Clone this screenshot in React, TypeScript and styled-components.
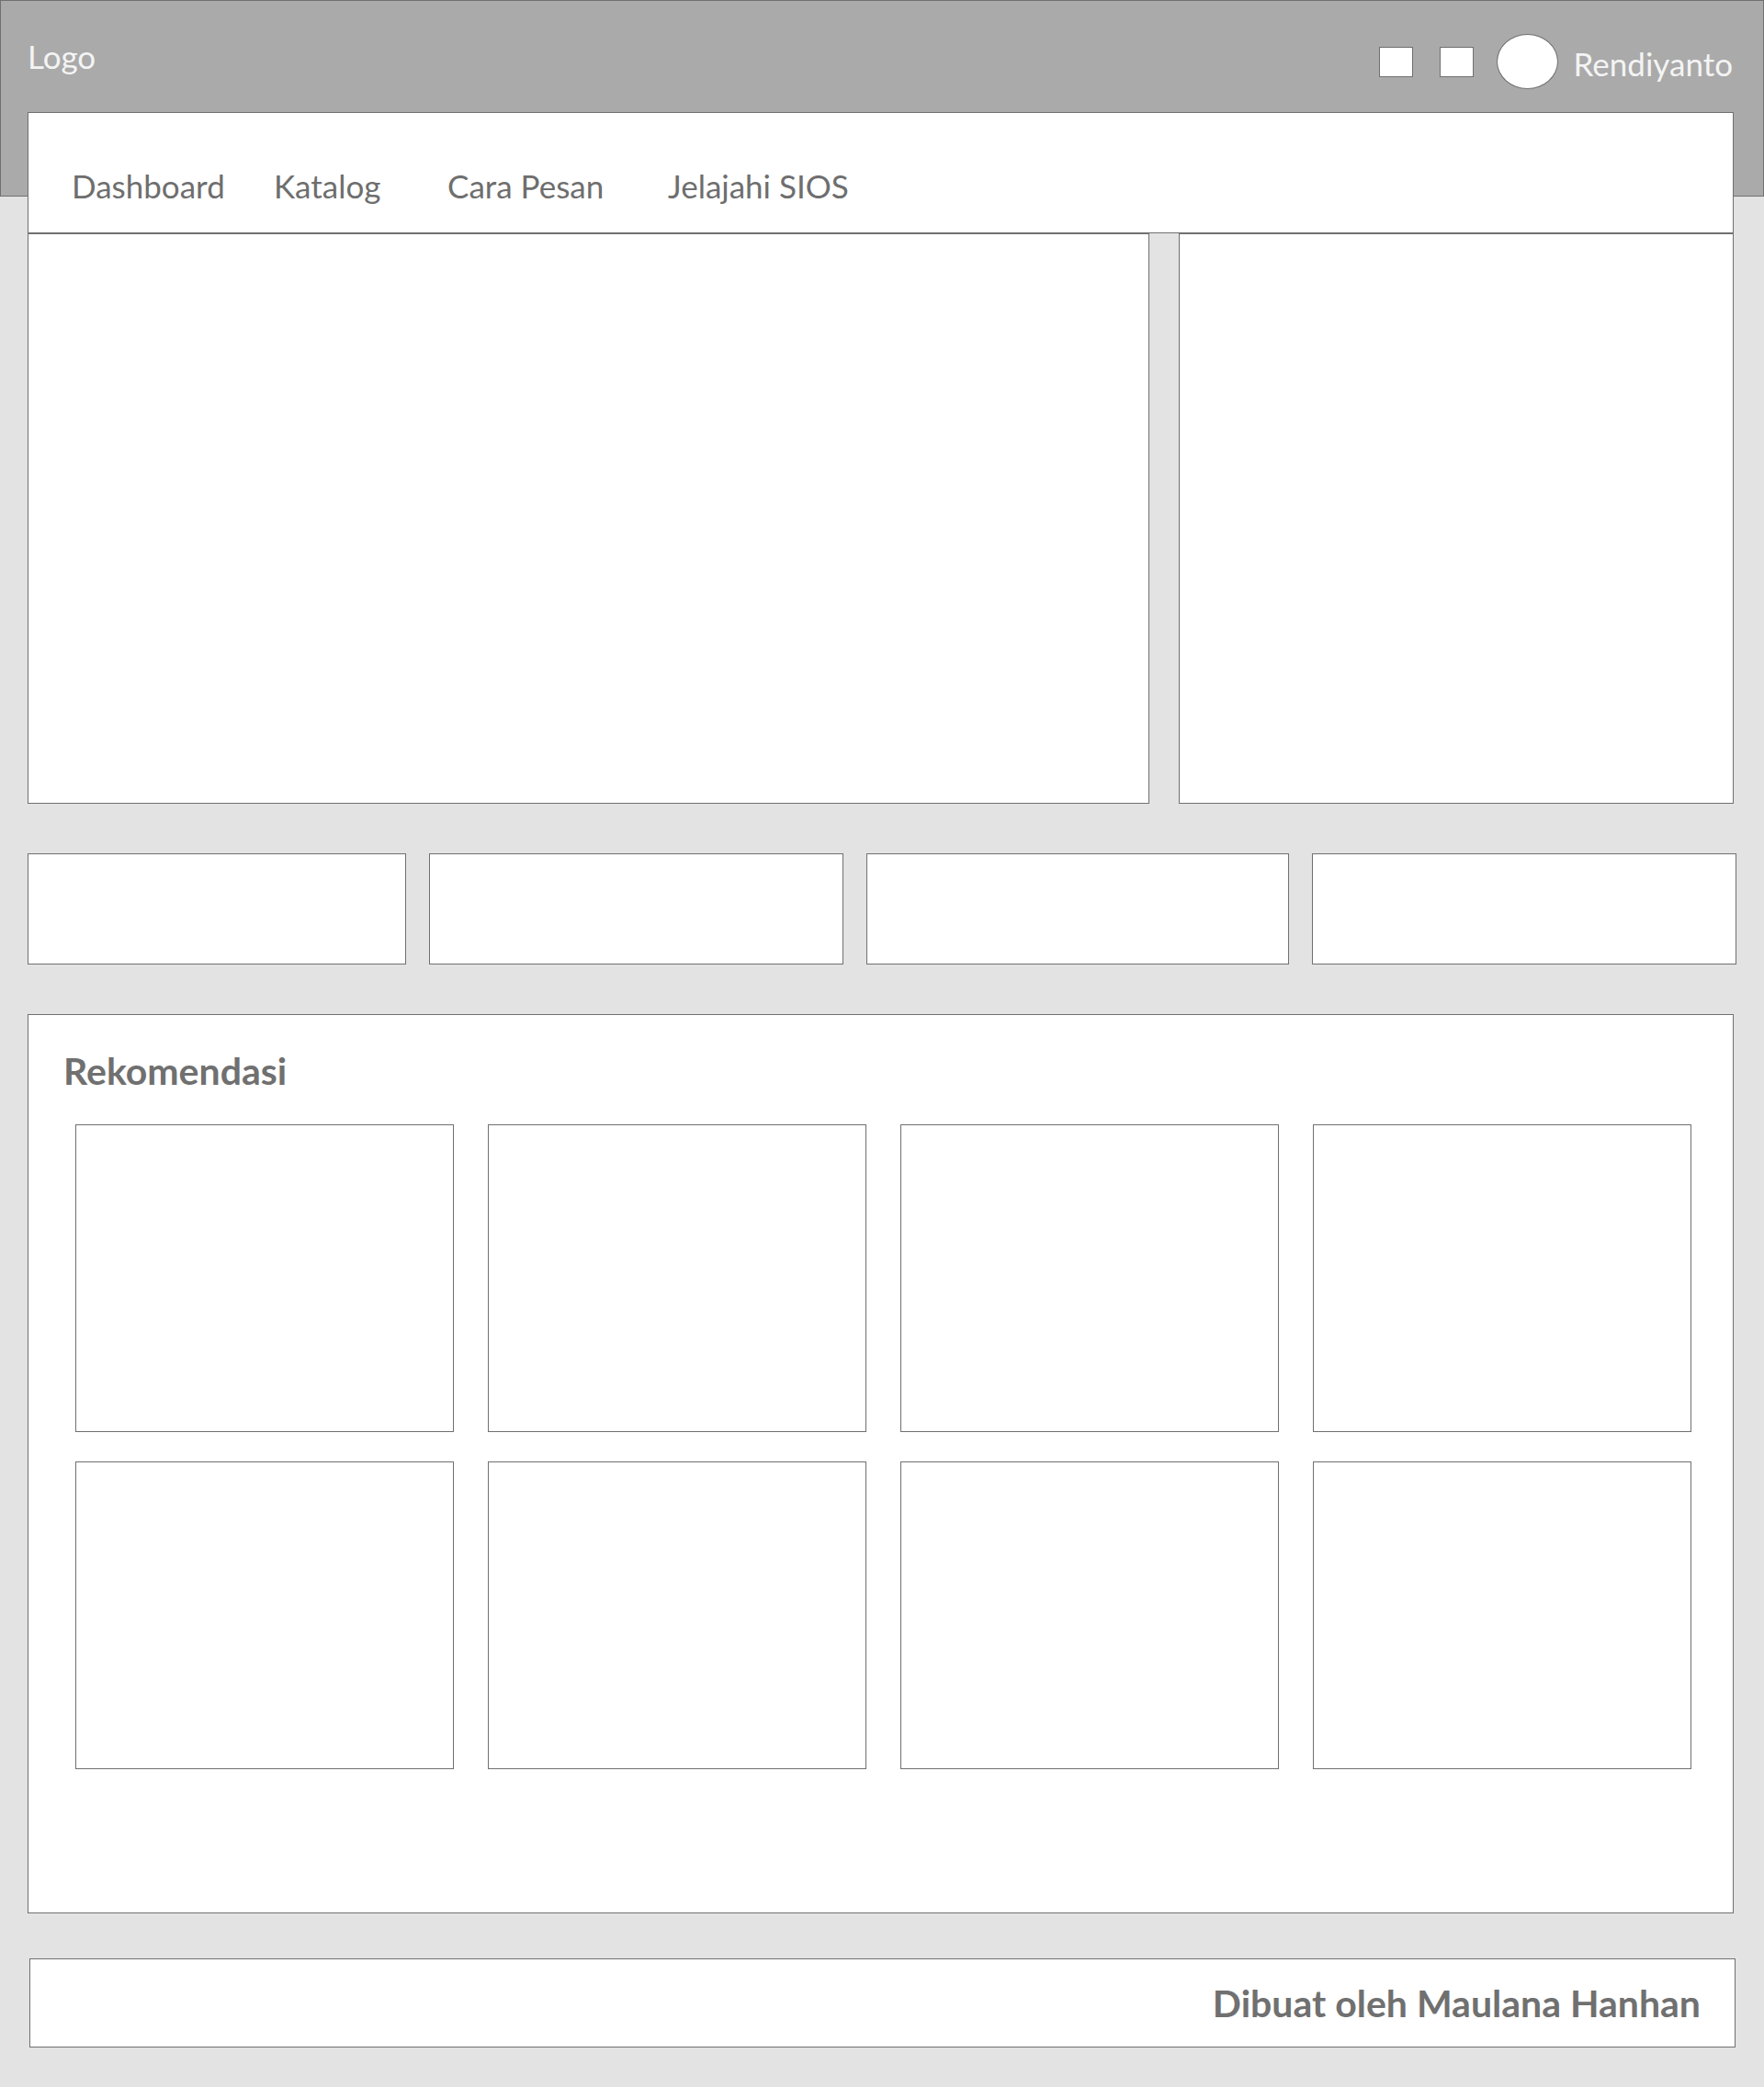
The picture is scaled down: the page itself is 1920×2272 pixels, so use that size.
import styled, { createGlobalStyle } from 'styled-components';

const GlobalStyle = createGlobalStyle`
    * {
        box-sizing: border-box;
    }

    body {
        margin: 0;
        background-color: #e3e3e3;
        font-family: 'Lato', 'Open Sans', sans-serif;
    }
`;

const Page = styled.div`
    width: 1920px;
    min-height: 2272px;
    background-color: #e3e3e3;
`;

const Header = styled.header`
    height: 214px;
    background-color: #aaaaaa;
    border: 1px solid #707070;
`;

const TopBar = styled.div`
    display: flex;
    justify-content: space-between;
    align-items: flex-start;
    padding: 0 33px 0 29px;
`;

const Logo = styled.div`
    margin-top: 39px;
    font-size: 35px;
    line-height: 42px;
    color: #f4f4f4;
`;

const UserArea = styled.div`
    display: flex;
    align-items: center;
    margin-top: 36px;
`;

const IconBox = styled.div<{ $gap: number }>`
    width: 37px;
    height: 33px;
    background-color: #fff;
    border: 1px solid #707070;
    margin-right: ${(p) => p.$gap}px;
`;

const Avatar = styled.div`
    width: 67px;
    height: 60px;
    border-radius: 50%;
    background-color: #fff;
    border: 1px solid #707070;
    margin-right: 17px;
`;

const UserName = styled.span`
    margin-top: 4px;
    font-size: 35px;
    line-height: 42px;
    color: #f4f4f4;
`;

const Main = styled.main`
    margin: -92px 0 0 30px;
    width: 1857px;
`;

const Nav = styled.nav`
    display: flex;
    height: 132px;
    padding: 58px 0 0 47px;
    background-color: #fff;
    border: 1px solid #707070;
`;

const NavLink = styled.a<{ $w?: number }>`
    display: block;
    width: ${(p) => (p.$w ? `${p.$w}px` : 'auto')};
    font-size: 35px;
    line-height: 42px;
    color: #6e6e6e;
    text-decoration: none;
    cursor: pointer;
`;

const Hero = styled.section`
    display: grid;
    grid-template-columns: 1221px 604px;
    gap: 32px;
    height: 621px;
`;

const Panel = styled.div`
    background-color: #fff;
    border: 1px solid #707070;
`;

const Shortcuts = styled.section`
    display: grid;
    grid-template-columns: 412px 451px 460px 462px;
    gap: 25px;
    width: 1860px;
    height: 121px;
    margin-top: 54px;
`;

const Recommend = styled.section`
    height: 979px;
    margin-top: 54px;
    padding: 37px 0 0 38px;
    background-color: #fff;
    border: 1px solid #707070;
`;

const Title = styled.h2`
    margin: 0;
    font-size: 41px;
    line-height: 48px;
    font-weight: 700;
    color: #707070;
`;

const ProductGrid = styled.div`
    display: grid;
    grid-template-columns: repeat(4, 412px);
    grid-auto-rows: 335px;
    column-gap: 37px;
    row-gap: 32px;
    margin: 34px 0 0 13px;
`;

const ProductCard = styled.div`
    background-color: #fff;
    border: 1px solid #707070;
`;

const Footer = styled.footer`
    display: flex;
    justify-content: flex-end;
    align-items: center;
    width: 1857px;
    height: 97px;
    margin: 49px 0 0 2px;
    padding-right: 37px;
    background-color: #fff;
    border: 1px solid #707070;
    font-size: 41px;
    font-weight: 700;
    color: #707070;
`;

const menu = [
    { label: 'Dashboard', w: 220 },
    { label: 'Katalog', w: 189 },
    { label: 'Cara Pesan', w: 240 },
    { label: 'Jelajahi SIOS' },
];

const App = () => {
    return (
        <Page>
            <GlobalStyle />
            <Header>
                <TopBar>
                    <Logo>Logo</Logo>
                    <UserArea>
                        <IconBox $gap={29} />
                        <IconBox $gap={25} />
                        <Avatar />
                        <UserName>Rendiyanto</UserName>
                    </UserArea>
                </TopBar>
            </Header>

            <Main>
                <Nav>
                    {menu.map((m) => (
                        <NavLink key={m.label} $w={m.w}>
                            {m.label}
                        </NavLink>
                    ))}
                </Nav>

                <Hero>
                    <Panel />
                    <Panel />
                </Hero>

                <Shortcuts>
                    {[0, 1, 2, 3].map((i) => (
                        <Panel key={i} />
                    ))}
                </Shortcuts>

                <Recommend>
                    <Title>Rekomendasi</Title>
                    <ProductGrid>
                        {Array.from({ length: 8 }).map((_, i) => (
                            <ProductCard key={i} />
                        ))}
                    </ProductGrid>
                </Recommend>

                <Footer>Dibuat oleh Maulana Hanhan</Footer>
            </Main>
        </Page>
    );
};

export default App;
